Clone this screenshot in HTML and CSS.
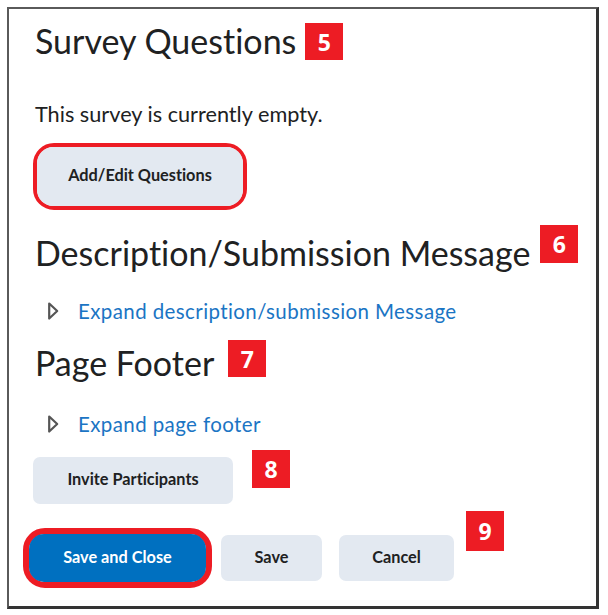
FILE: index.html
```html
<!DOCTYPE html>
<html lang="en">
<head>
    <meta charset="UTF-8">
    <title>Survey Questions</title>
    <link rel="stylesheet" href="styles.css">
</head>
<body>
    <div class="frame">
        <div class="heading-row heading-survey">
            <h2>Survey Questions</h2>
            <span class="badge">5</span>
        </div>
        <p class="empty-text">This survey is currently empty.</p>
        <div class="outline outline-add">
            <button class="btn">Add/Edit Questions</button>
        </div>

        <div class="heading-row heading-desc">
            <h2>Description/Submission Message</h2>
            <span class="badge">6</span>
        </div>
        <a class="expander expander-desc" href="#">
            <svg width="12" height="20" viewBox="0 0 12 20"><path d="M2.2 2.5 L10.2 10 L2.2 17.5 Z" fill="none" stroke="#555" stroke-width="2.2" stroke-linejoin="round"/></svg>
            <span>Expand description/submission Message</span>
        </a>

        <div class="heading-row heading-footer">
            <h2>Page Footer</h2>
            <span class="badge">7</span>
        </div>
        <a class="expander expander-footer" href="#">
            <svg width="12" height="20" viewBox="0 0 12 20"><path d="M2.2 2.5 L10.2 10 L2.2 17.5 Z" fill="none" stroke="#555" stroke-width="2.2" stroke-linejoin="round"/></svg>
            <span>Expand page footer</span>
        </a>

        <div class="invite-row">
            <button class="btn btn-invite">Invite Participants</button>
            <span class="badge">8</span>
        </div>

        <div class="actions">
            <div class="outline outline-primary">
                <button class="btn btn-primary">Save and Close</button>
            </div>
            <button class="btn btn-save">Save</button>
            <button class="btn btn-cancel">Cancel</button>
            <span class="badge">9</span>
        </div>
    </div>
</body>
</html>
```

FILE: styles.css
```css
body {
    margin: 0;
    background: #fff;
    font-family: Lato, "Liberation Sans", sans-serif;
    font-variant-ligatures: none;
    color: #202122;
}
.frame {
    display: flex;
    flex-direction: column;
    align-items: flex-start;
    margin: 7px 9px 0 7px;
    height: 602px;
    box-sizing: border-box;
    border: 2px solid #5a5a5a;
    border-right: 3px solid #333;
    border-bottom: 3px solid #333;
    padding: 12px 0 0 26px;
}

/* headings with their numbered markers */
.heading-row {
    display: flex;
    align-items: flex-start;
}
.heading-row h2 {
    margin: 0;
    font-size: 34px;
    font-weight: 400;
    line-height: 40px;
}
.badge {
    display: inline-flex;
    align-items: center;
    justify-content: center;
    flex-shrink: 0;
    width: 38px;
    height: 38px;
    background: #ed1c24;
    color: #fff;
    font-family: "Open Sans", "Liberation Sans", sans-serif;
    font-weight: 700;
    font-size: 23px;
}
.heading-survey .badge {
    margin: 2px 0 0 9px;
    height: 37px;
}
.heading-desc {
    margin-top: 23px;
}
.heading-desc .badge {
    margin: -8px 0 0 10px;
}
.heading-footer {
    margin-top: 19px;
}
.heading-footer .badge {
    margin: -3px 0 0 14px;
    height: 37px;
}

.empty-text {
    margin: 40px 0 0 0;
    font-size: 21.7px;
    line-height: 26px;
}

/* red annotation rings */
.outline {
    display: flex;
    border: 4px solid #ed1c24;
    border-radius: 21px;
}
.outline-add {
    margin: 16px 0 0 -2px;
}
.outline-add .btn {
    width: 206px;
    height: 59px;
    border-radius: 16px;
}

.btn {
    font-family: Lato, "Liberation Sans", sans-serif;
    font-variant-ligatures: none;
    font-weight: 700;
    font-size: 16.3px;
    color: #202122;
    background: #e3e9f1;
    border: none;
    border-radius: 7px;
    padding: 0 0 4px 0;
    cursor: pointer;
}

.expander {
    display: flex;
    align-items: center;
    gap: 19px;
    margin-left: 12px;
    color: #1b75c4;
    font-size: 20.5px;
    letter-spacing: 0.4px;
    line-height: 26px;
    text-decoration: none;
}
.expander-desc {
    margin-top: 25px;
}
.expander-footer {
    margin-top: 28px;
}

.invite-row {
    display: flex;
    align-items: flex-start;
    margin: 20px 0 0 -2px;
}
.btn-invite {
    width: 200px;
    height: 47px;
}
.invite-row .badge {
    margin: -7px 0 0 19px;
}

.actions {
    display: flex;
    align-items: flex-start;
    margin: 24px 0 0 -12px;
}
.outline-primary {
    border-width: 6px;
    border-radius: 22px;
}
.btn-primary {
    width: 177px;
    height: 48px;
    border-radius: 15px;
    background: #0070c0;
    color: #fff;
}
.btn-save {
    width: 101px;
    height: 46px;
    margin: 7px 0 0 9px;
}
.btn-cancel {
    width: 115px;
    height: 46px;
    margin: 7px 0 0 17px;
}
.actions .badge {
    margin: -17px 0 0 12px;
    height: 40px;
}
```
